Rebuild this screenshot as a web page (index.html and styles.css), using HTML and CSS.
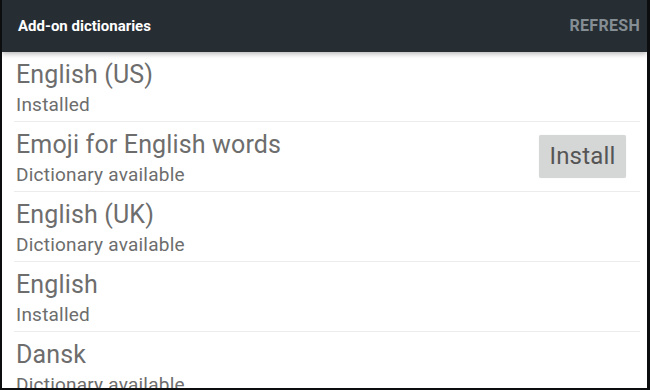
FILE: index.html
```html
<!DOCTYPE html>
<html>
<head>
<meta charset="utf-8">
<link rel="stylesheet" href="styles.css">
</head>
<body>
<div class="screen">
  <header class="appbar">
    <span class="appbar-title">Add-on dictionaries</span>
    <span class="appbar-action">REFRESH</span>
  </header>
  <ul class="list">
    <li class="row">
      <div class="text">
        <div class="title">English (US)</div>
        <div class="sub">Installed</div>
      </div>
    </li>
    <li class="row">
      <div class="text">
        <div class="title">Emoji for English words</div>
        <div class="sub">Dictionary available</div>
      </div>
      <button class="install">Install</button>
    </li>
    <li class="row">
      <div class="text">
        <div class="title">English (UK)</div>
        <div class="sub">Dictionary available</div>
      </div>
    </li>
    <li class="row">
      <div class="text">
        <div class="title">English</div>
        <div class="sub">Installed</div>
      </div>
    </li>
    <li class="row">
      <div class="text">
        <div class="title">Dansk</div>
        <div class="sub">Dictionary available</div>
      </div>
    </li>
  </ul>
</div>
</body>
</html>
```
FILE: styles.css
```css
html, body {
  margin: 0;
  padding: 0;
  background: #0b0d0e;
}
body {
  width: 650px;
  height: 390px;
  overflow: hidden;
  font-family: Roboto, "Noto Sans", sans-serif;
}
.screen {
  margin: 0 3px 0 2px;
  width: 645px;
  height: 388px;
  background: #ffffff;
  overflow: hidden;
  position: relative;
}
.appbar {
  height: 52px;
  background: #262d33;
  display: flex;
  align-items: center;
  justify-content: space-between;
  padding: 0 7px 0 16px;
  box-sizing: border-box;
  box-shadow: 0 2px 5px rgba(0,0,0,0.28);
  position: relative;
  z-index: 1;
}
.appbar-title {
  color: #ffffff;
  font-size: 15px;
  font-weight: 700;
  margin-top: -1px;
}
.appbar-action {
  color: #858e94;
  font-size: 16px;
  font-weight: 700;
  letter-spacing: 0.3px;
  margin-top: -1px;
}
.list {
  list-style: none;
  margin: 0;
  padding: 0;
}
.row {
  display: flex;
  align-items: center;
  justify-content: space-between;
  height: 70px;
  box-sizing: border-box;
  margin: 0 7px 0 12px;
  padding: 0 14px 0 2px;
  border-bottom: 1px solid #ececec;
}
.text {
  padding-top: 3px;
}
.title {
  color: #6d6d6d;
  font-size: 25px;
  letter-spacing: 0.15px;
  line-height: 28px;
}
.sub {
  color: #6d6d6d;
  font-size: 19px;
  letter-spacing: 0.22px;
  line-height: 22px;
  margin-top: 5px;
}
.install {
  width: 87px;
  height: 43px;
  border: none;
  border-radius: 2px;
  background: #d5d6d6;
  color: #555555;
  font-family: Roboto, "Noto Sans", sans-serif;
  font-size: 24px;
  letter-spacing: 0.2px;
  padding: 0;
  margin-top: -1px;
  box-shadow: 0 0 1px rgba(0,0,0,0.12);
}
```
